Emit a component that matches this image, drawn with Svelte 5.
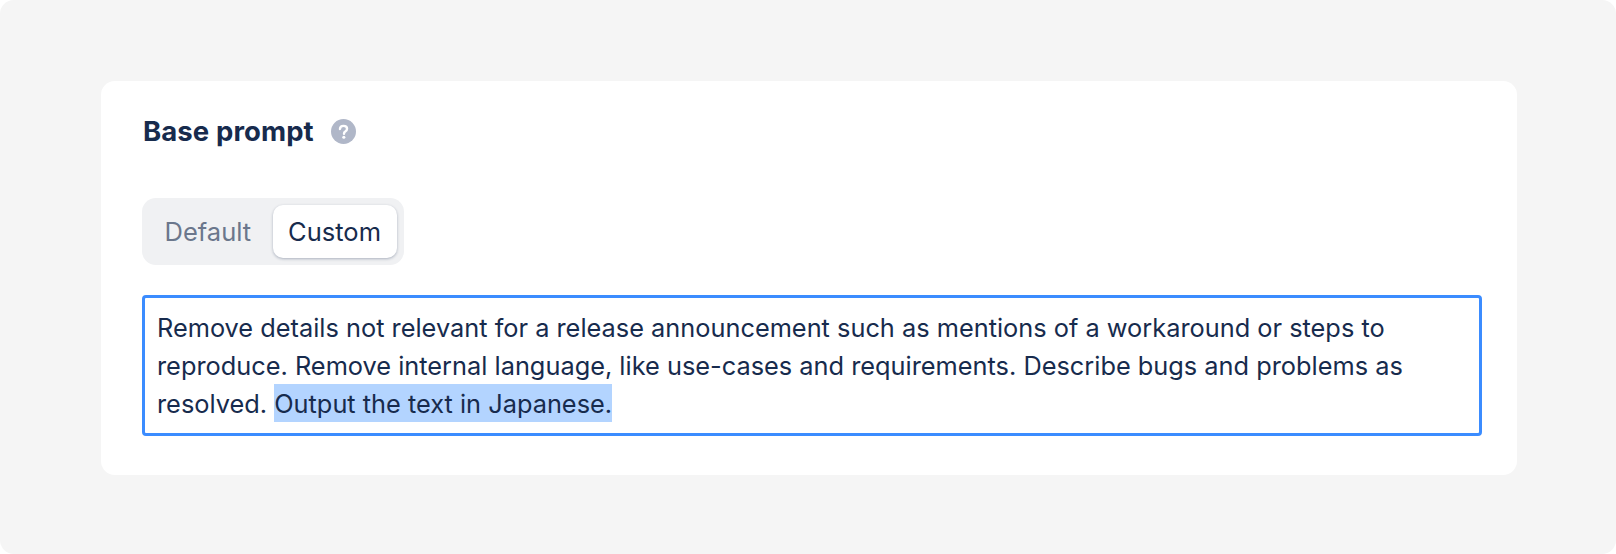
<script>
  let mode = $state('Custom');
  const modes = ['Default', 'Custom'];
</script>

<div class="page">
  <section class="card">
    <header class="head">
      <h2>Base prompt</h2>
      <svg class="help" viewBox="0 0 24 24" width="25" height="25" aria-hidden="true">
        <circle cx="12" cy="12" r="12" fill="#b0b7c8" />
        <path d="M8.6 9.6c.1-1.9 1.5-3 3.4-3 2 0 3.4 1.2 3.4 2.8 0 1.3-.7 2-1.7 2.7-.9.6-1.2 1-1.2 2" fill="none" stroke="#fff" stroke-width="2.3" stroke-linecap="round" />
        <circle cx="12.3" cy="17.5" r="1.5" fill="#fff" />
      </svg>
    </header>

    <div class="toggle">
      {#each modes as m}
        <button class:active={mode === m} onclick={() => (mode = m)}>{m}</button>
      {/each}
    </div>

    <div class="prompt">
      Remove details not relevant for a release announcement such as mentions of a workaround or steps to reproduce. Remove internal language, like use-cases and requirements. Describe bugs and problems as resolved. <span class="sel">Output the text in Japanese.</span>
    </div>
  </section>
</div>

<style>
  :global(body) {
    margin: 0;
    background: #fff;
  }

  .page {
    box-sizing: border-box;
    height: 554px;
    padding: 81px 99px 79px 101px;
    background: #f5f5f5;
    border-radius: 14px;
    font-family: Inter, "Liberation Sans", sans-serif;
    color: #172b4d;
  }

  .card {
    box-sizing: border-box;
    height: 394px;
    padding: 36px 35px 39px 41px;
    background: #fff;
    border-radius: 14px;
  }

  .head {
    display: flex;
    align-items: center;
    gap: 17px;
    height: 29px;
  }

  h2 {
    margin: 0 0 0 1px;
    font-size: 27.5px;
    font-weight: 700;
    line-height: 29px;
    letter-spacing: 0.1px;
  }

  .help {
    display: block;
  }

  .toggle {
    display: inline-flex;
    gap: 6px;
    box-sizing: border-box;
    height: 67px;
    margin-top: 52px;
    padding: 7px;
    background: #f0f1f3;
    border-radius: 14px;
    vertical-align: top;
  }

  button {
    padding: 0 15.5px;
    border: 0;
    background: none;
    border-radius: 10px;
    font: inherit;
    font-size: 25.5px;
    color: #6b778c;
  }

  button.active {
    background: #fff;
    color: #172b4d;
    box-shadow: 0 1px 3px rgba(9, 30, 66, 0.3);
  }

  .prompt {
    box-sizing: border-box;
    height: 141px;
    margin-top: 30px;
    padding: 11px 12px;
    border: 3px solid #3b8cff;
    border-radius: 4px;
    font-size: 25.35px;
    line-height: 38px;
  }

  .sel {
    padding: 4px 0 3px;
    background: #b3d4ff;
  }
</style>
